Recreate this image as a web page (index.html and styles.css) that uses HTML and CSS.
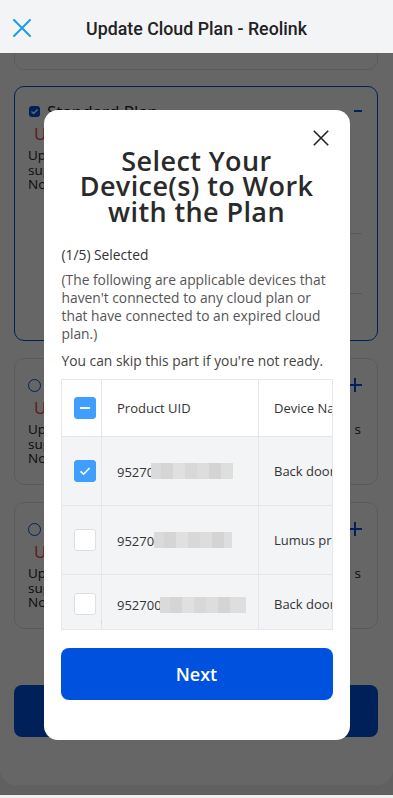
FILE: index.html
```html
<!DOCTYPE html>
<html lang="en">
<head>
<meta charset="utf-8">
<title>Update Cloud Plan - Reolink</title>
<link rel="stylesheet" href="styles.css">
</head>
<body>
<div class="app">
  <header class="appbar">
    <svg class="appbar-close" width="18" height="18" viewBox="0 0 18 18" aria-hidden="true">
      <path d="M1 1 L17 17 M17 1 L1 17" stroke="#1e9be9" stroke-width="2" fill="none" stroke-linecap="round"/>
    </svg>
    <h1 class="appbar-title">Update Cloud Plan - Reolink</h1>
    <span></span>
  </header>

  <main class="content">
    <section class="plan plan-top">
      <div class="plan-apply">Apply</div>
    </section>

    <section class="plan plan-active">
      <div class="plan-head">
        <span class="mini-check">
          <svg width="11" height="11" viewBox="0 0 11 11"><path d="M2.5 5.6 L4.6 7.6 L8.6 3.4" stroke="#fff" stroke-width="1.4" fill="none"/></svg>
        </span>
        <span class="plan-name">Standard Plan</span>
        <span class="plan-toggle minus"></span>
      </div>
      <div class="plan-price">US$3.49/month</div>
      <p class="plan-desc">
        <span class="ln">Upload videos to the cloud</span>
        <span class="ln">supports up to 3 cameras</span>
        <span class="ln">Notifications and playback</span>
      </p>
      <div class="plan-divider first"></div>
      <div class="plan-divider"></div>
    </section>

    <section class="plan">
      <div class="plan-head">
        <span class="radio"></span>
        <span class="plan-name">Premier Plan</span>
        <span class="plan-toggle plus"></span>
      </div>
      <div class="plan-price">US$6.99/month</div>
      <p class="plan-desc">
        <span class="ln wide"><span>Upload videos to the cloud for all camera</span><span>s</span></span>
        <span class="ln">supports up to 5 cameras</span>
        <span class="ln">Notifications and playback</span>
      </p>
    </section>

    <section class="plan">
      <div class="plan-head">
        <span class="radio"></span>
        <span class="plan-name">Business Plan</span>
        <span class="plan-toggle plus"></span>
      </div>
      <div class="plan-price">US$9.99/month</div>
      <p class="plan-desc">
        <span class="ln wide"><span>Upload videos to the cloud for all camera</span><span>s</span></span>
        <span class="ln">supports up to 10 cameras</span>
        <span class="ln">Notifications and playback</span>
      </p>
    </section>

    <button class="primary-btn bg-btn">Subscribe</button>
  </main>

  <div class="overlay">
    <div class="modal" role="dialog">
      <svg class="modal-close" width="16" height="16" viewBox="0 0 16 16" aria-hidden="true">
        <path d="M0.8 0.8 L15.2 15.2 M15.2 0.8 L0.8 15.2" stroke="#222" stroke-width="1.6" fill="none"/>
      </svg>
      <h2 class="modal-title">Select Your<br>Device(s) to Work<br>with the Plan</h2>
      <p class="selected">(1/5) Selected</p>
      <p class="note">(The following are applicable devices that<br>haven't connected to any cloud plan or<br>that have connected to an expired cloud<br>plan.)</p>
      <p class="skip">You can skip this part if you're not ready.</p>

      <div class="table-wrap">
        <table class="dev-table">
          <colgroup><col class="c1"><col class="c2"><col class="c3"></colgroup>
          <thead>
            <tr>
              <th class="sel"><span class="cb on"><span class="bar"></span></span></th>
              <th>Product UID</th>
              <th>Device Name</th>
            </tr>
          </thead>
          <tbody>
            <tr class="r1">
              <td class="sel"><span class="cb on">
                <svg width="22" height="22" viewBox="0 0 22 22"><path d="M6.5 11.3 L9.6 14.2 L15.6 8" stroke="#fff" stroke-width="1.6" fill="none"/></svg>
              </span></td>
              <td><span class="uid">95270</span><span class="blur b1"></span></td>
              <td>Back door camera</td>
            </tr>
            <tr class="r2">
              <td class="sel"><span class="cb"></span></td>
              <td><span class="uid">95270</span><span class="blur b2"></span></td>
              <td>Lumus pro</td>
            </tr>
            <tr class="r3">
              <td class="sel"><span class="cb"></span></td>
              <td><span class="uid">952700</span><span class="blur b3"></span></td>
              <td>Back door 2</td>
            </tr>
          </tbody>
        </table>
      </div>

      <button class="primary-btn next-btn">Next</button>
    </div>
  </div>
</div>
</body>
</html>
```
FILE: styles.css
```css
* { box-sizing: border-box; }
html, body { margin: 0; padding: 0; }
body { background: #f0f0f0; font-family: "Open Sans", "Liberation Sans", sans-serif; }

.app { width: 393px; height: 798px; position: relative; overflow: hidden; }

/* App bar */
.appbar {
  position: relative; z-index: 3;
  height: 53px; background: #f3f4f6;
  display: grid; grid-template-columns: 44px 1fr 44px; align-items: center;
}
.appbar-close { margin-left: 13px; margin-top: 3px; display: block; }
.appbar-title {
  margin: 0; text-align: center;
  font-family: Roboto, "Liberation Sans", sans-serif; font-weight: 500;
  font-size: 17.8px; color: #222; padding-top: 3px;
}

/* Background page */
.content {
  background: #fff; height: 732px;
  border-radius: 0 0 16px 16px;
  padding: 0 15px 0 14px;
  display: flex; flex-direction: column;
}
.plan {
  border: 1px solid #e2e2e2; border-radius: 10px;
  margin-top: 17px; height: 127px;
  padding: 18px 15px 0 13px;
  position: relative;
}
.plan-top { margin-top: -40px; height: 57px; padding: 0; }
.plan-apply {
  position: absolute; left: 0; right: 0; top: 14px; text-align: center;
  color: #e5484d; font-size: 17px;
}
.plan-active { margin-top: 16px; height: 255px; border-color: #0052de; padding-top: 16px; }
.plan-head { display: flex; align-items: center; height: 16px; }
.mini-check {
  width: 11px; height: 11px; border-radius: 3px; background: #0052de;
  display: inline-flex; margin-left: 1px; margin-right: 7px;
}
.mini-check svg { display: block; }
.radio {
  width: 13px; height: 13px; border: 1.5px solid #0052de; border-radius: 50%;
  margin-right: 6px;
}
.plan-name { font-size: 17px; color: #222; flex: 1; }
.plan-toggle { width: 14px; height: 14px; position: relative; }
.plan-toggle::before, .plan-toggle.plus::after {
  content: ""; position: absolute; background: #0052de;
}
.plan-toggle::before { left: 0; right: 0; top: 6px; height: 2px; }
.plan-toggle.minus::before { left: 6px; right: 0; }
.plan-toggle.plus::after { top: 0; bottom: 0; left: 6px; width: 2px; }
.plan-price { color: #e5484d; font-size: 17px; margin: 5px 0 0 6px; line-height: 20px; }
.plan-desc { margin: 4px 0 0; font-size: 13.5px; line-height: 14.5px; color: #222; }
.plan-desc .ln { display: block; white-space: nowrap; }
.plan-desc .ln.wide { display: flex; justify-content: space-between; margin-right: 1px; }
.plan-divider { height: 1px; background: #ddd; margin: 41px 0 0 30px; }
.plan-divider + .plan-divider { margin-top: 59px; }

.primary-btn {
  border: 0; border-radius: 8px; background: #0052de; color: #fff;
  font-family: "Open Sans", sans-serif; font-weight: 600; font-size: 18px;
  height: 52px; display: block; width: 100%;
}
.bg-btn { margin-top: 56px; }

/* Overlay + modal */
.overlay {
  position: absolute; top: 53px; left: 0; right: 0; bottom: 3px; z-index: 2;
  background: rgba(0, 0, 0, 0.6);
  display: flex; align-items: center; justify-content: center;
}
.modal {
  width: 306px; height: 630px; background: #fff; border-radius: 14px;
  position: relative; padding: 0 17px;
  display: flex; flex-direction: column; margin-top: 1px;
}
.modal-close { position: absolute; top: 20px; right: 21px; }
.modal-title {
  margin: 38px 0 0; text-align: center; color: #2a2a2a;
  font-size: 27px; font-weight: 600; line-height: 25.5px; letter-spacing: 0.4px;
}
.selected { margin: 22px 0 0 1px; font-size: 13.8px; line-height: 18px; color: #333; }
.note { margin: 7px 0 0 1px; font-size: 13.8px; line-height: 18px; color: #555; white-space: nowrap; }
.skip { margin: 9px 0 0 1px; font-size: 13.8px; line-height: 18px; color: #444; white-space: nowrap; }

.table-wrap {
  margin-top: 9px; height: 251px; overflow: hidden; position: relative;
  border: 1px solid #e6e8eb; flex: none;
}
.table-wrap::after {
  content: ""; position: absolute; left: 0; top: 240px; width: 40px; height: 6px;
  background: linear-gradient(rgba(0,0,0,0.09), rgba(0,0,0,0));
}
.dev-table { border-collapse: collapse; table-layout: fixed; width: 347px; }
.dev-table col.c1 { width: 40px; }
.dev-table col.c2 { width: 157px; }
.dev-table col.c3 { width: 150px; }
.dev-table th, .dev-table td {
  border-right: 1px solid #e4e6ea; border-bottom: 1px solid #e4e6ea;
  text-align: left; font-weight: 400; font-size: 13px; color: #333;
  white-space: nowrap; overflow: hidden;
  padding: 0 0 0 15px;
}
.dev-table th { height: 56px; background: #fff; }
.dev-table td { height: 69px; background: #f3f4f6; }
.dev-table tr.r3 td { height: 60px; }
.dev-table .sel {
  padding: 0 0 0 12px; position: relative; z-index: 1;
  box-shadow: 3px 0 5px -1px rgba(0, 0, 0, 0.1);
}
.cb {
  width: 22px; height: 22px; border-radius: 3px; display: flex;
  align-items: center; justify-content: center;
  background: #fff; border: 1px solid #dcdfe6;
}
.cb.on { background: #409eff; border-color: #409eff; }
.cb svg { display: block; margin: -1px; }
.cb .bar { width: 10px; height: 2px; background: #fff; }
.uid { vertical-align: middle; }
.blur {
  display: inline-block; vertical-align: middle; height: 16px; margin-left: -3px;
  background: linear-gradient(90deg,
    #dadada 0 10px, #d5d5d5 10px 22px, #e0e0e0 22px 34px, #d8d8d8 34px 46px,
    #dddddd 46px 58px, #d4d4d4 58px 70px, #dedede 70px 100px);
}
.b1 { width: 82px; }
.b2 { width: 78px; margin-left: 0; }
.b3 { width: 86px; margin-left: -2px; }

.next-btn { margin-top: 18px; flex: none; }
```
